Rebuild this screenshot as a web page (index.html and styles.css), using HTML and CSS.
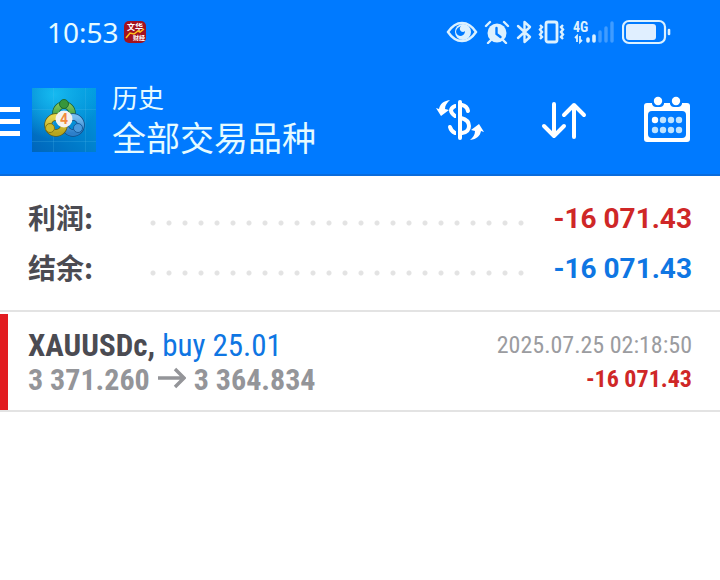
FILE: index.html
```html
<!DOCTYPE html>
<html lang="zh-CN">
<head>
  <meta charset="UTF-8" />
  <meta name="viewport" content="width=device-width, initial-scale=1.0"/>
  <title>历史</title>
  <link rel="stylesheet" href="styles.css">
</head>
<body>
  <header class="header">
    <div class="status-bar">
      <span class="clock">10:53</span>
      <svg class="app-badge" width="22" height="22" viewBox="0 0 22 22">
        <rect width="22" height="22" rx="5" fill="#a3121f"/>
        <text x="3" y="9" class="badge-text">文华</text>
        <text x="9" y="19" class="badge-text badge-small">财经</text>
        <path d="M2 17l4-5 4 1 4-3 2 1 4-3" fill="none" stroke="#ffc21c" stroke-width="1.5"/>
      </svg>
      <div class="status-icons">
        <svg width="32" height="24" viewBox="0 0 32 24">
          <path d="M2 12Q8 3 16 3T30 12Q24 21 16 21T2 12Z" fill="none" stroke="#dcf1ff" stroke-width="2.4"/>
          <circle cx="17" cy="12" r="8" fill="#dcf1ff"/>
          <path d="M15 6q-5 2-5 6 1 4 5 4 4-1 4-5-1 1-2 1-2 0-3-2-1-2 1-4z" fill="#007aff"/>
        </svg>
        <svg width="26" height="24" viewBox="0 0 26 24">
          <circle cx="13" cy="13" r="9.5" fill="#dcf1ff"/>
          <path d="M2 6l4-4M24 6l-4-4M7 20l-3 3M19 20l3 3" stroke="#dcf1ff" stroke-width="2.4" stroke-linecap="round"/>
          <path d="M12.5 8v6l4 3" fill="none" stroke="#007aff" stroke-width="2.4" stroke-linecap="round"/>
        </svg>
        <svg width="16" height="24" viewBox="0 0 16 24">
          <path d="M2 6l12 11-5.500 5V2L14 7 2 18" fill="none" stroke="#dcf1ff" stroke-width="2.4" stroke-linejoin="round" stroke-linecap="round"/>
        </svg>
        <svg width="28" height="24" viewBox="0 0 28 24">
          <rect x="8" y="2" width="11" height="20" rx="2" fill="none" stroke="#dcf1ff" stroke-width="2.8"/>
          <path d="M2 5l2 2-2 2.500 2 2.500-2 2.500 2 2.500-2 2M25 5l-2 2 2 2.500-2 2.500 2 2.500-2 2.500 2 2" fill="none" stroke="#dcf1ff" stroke-width="2.4"/>
        </svg>
        <svg width="44" height="28" viewBox="0 0 44 28">
          <text x="1" y="14" class="network-text">4G</text>
          <path d="M5 24v-6l-2 2M8 18v6l2-2" fill="none" stroke="#dcf1ff" stroke-width="1.8"/>
          <path d="M16 23v-2M22 23v-5" stroke="#dcf1ff" stroke-width="3.6" stroke-linecap="round"/>
          <path d="M28 23v-9M34 23v-13M40 23V5" stroke="#409cff" stroke-width="3.4" stroke-linecap="round"/>
        </svg>
        <svg width="50" height="26" viewBox="0 0 50 26">
          <rect x="1" y="2" width="42" height="22" rx="6" fill="none" stroke="#dcf1ff" stroke-width="2.2"/>
          <rect x="4" y="5" width="30" height="16" rx="3" fill="#e0efff"/>
          <path d="M47 11v4" stroke="#dcf1ff" stroke-width="2.6" stroke-linecap="round"/>
        </svg>
      </div>
    </div>

    <div class="app-bar">
      <button class="menu-button" aria-label="菜单">
        <svg width="20" height="32" viewBox="0 0 20 32"><path d="M0 5.500h20M0 17.500h20M0 29.500h20" stroke="#fff" stroke-width="5"/></svg>
      </button>
      <svg class="logo" width="64" height="64" viewBox="0 0 64 64">
        <defs>
          <linearGradient id="sky" x1="1" y1="0" x2="0" y2="1">
            <stop offset="0" stop-color="#009ce0"/><stop offset="1" stop-color="#0065bb"/>
          </linearGradient>
          <radialGradient id="glow" cx="0.35" cy="0.1" r="0.7">
            <stop offset="0" stop-color="#16baf0"/><stop offset="1" stop-color="#16baf0" stop-opacity="0"/>
          </radialGradient>
          <linearGradient id="green" x2="0" y2="1"><stop offset="0" stop-color="#80c35b"/><stop offset="1" stop-color="#238c35"/></linearGradient>
          <linearGradient id="yellow" x2="0" y2="1"><stop offset="0" stop-color="#e7d64c"/><stop offset="1" stop-color="#b8a51e"/></linearGradient>
          <linearGradient id="blue" x2="0" y2="1"><stop offset="0" stop-color="#77bdf0"/><stop offset="1" stop-color="#2c7fca"/></linearGradient>
        </defs>
        <rect width="64" height="64" fill="url(#sky)"/>
        <rect width="64" height="64" fill="url(#glow)"/>
        <path d="M0 21.500h64M0 53.500h64M21.500 0v64M53.500 0v64" stroke="#5bc4ee" stroke-opacity="0.2"/>
        <circle cx="32" cy="25" r="8" fill="none" stroke="#175e35" stroke-width="7.5"/>
        <circle cx="32" cy="25" r="8" fill="none" stroke="url(#green)" stroke-width="6"/>
        <circle cx="41" cy="37" r="8" fill="none" stroke="#164a82" stroke-width="7.5"/>
        <circle cx="41" cy="37" r="8" fill="none" stroke="url(#blue)" stroke-width="6"/>
        <circle cx="24" cy="37" r="8" fill="none" stroke="#615b17" stroke-width="7.5"/>
        <circle cx="24" cy="37" r="8" fill="none" stroke="url(#yellow)" stroke-width="6"/>
        <circle cx="32" cy="16" r="4.5" fill="#37963b" stroke="#1d6c34"/>
        <circle cx="18" cy="40" r="4.5" fill="#cdbb2d" stroke="#827616"/>
        <circle cx="46" cy="40" r="4.5" fill="#4b9add" stroke="#155d9f"/>
        <circle cx="32" cy="31" r="8.5" fill="#f4f2ef"/>
        <text x="32" y="36" class="logo-text">4</text>
      </svg>
      <div class="titles">
        <h1 class="title">历史</h1>
        <div class="subtitle">全部交易品种</div>
      </div>
      <div class="actions">
        <button class="action" aria-label="货币">
          <svg width="48" height="44" viewBox="0 0 48 44">
            <path d="M19 8q-8 4 0 10M26 7q5 1 6 6M25 20q8 2 8 8t-7 7M14 29q1 4 5 6" fill="none" stroke="#fff" stroke-width="4" stroke-linecap="round"/>
            <path d="M21 4v37" stroke="#007aff" stroke-width="2"/>
            <path d="M24 4v36" stroke="#fff" stroke-width="4" stroke-linecap="round"/>
            <path d="M14 2C7 3 4 6 3 11L0 10l5 8 8-6-4-1c0-4 2-6 5-9zM34 42c7-1 10-4 11-9l3 1-5-8-8 6 4 1c0 4-2 6-5 9z" fill="#fff"/>
          </svg>
        </button>
        <button class="action" aria-label="排序">
          <svg width="46" height="44" viewBox="0 0 46 44">
            <path d="M13 6v32M3 28l10 10 10-10M33 39V7M23 17L33 7l10 10" fill="none" stroke="#fff" stroke-width="4" stroke-linecap="round" stroke-linejoin="round"/>
          </svg>
        </button>
        <button class="action" aria-label="日历">
          <svg width="46" height="48" viewBox="0 0 46 48">
            <path d="M3 7H43q3 0 3 3V43q0 3-3 3H3q-3 0-3-3V10q0-3 3-3z" fill="#fff"/>
            <path d="M8 7h12v1q-1 3-4 3h-4q-3 0-4-3zM26 7h12v1q-1 3-4 3h-4q-3 0-4-3z" fill="#007aff"/>
            <rect x="4" y="15" width="38" height="27" rx="4" fill="#007aff"/>
            <circle cx="14" cy="5" r="4.2" fill="#fff"/>
            <circle cx="32" cy="5" r="4.2" fill="#fff"/>
            <g fill="#bfe3ff">
              <circle cx="11" cy="24" r="3.2" fill="#fff"/><circle cx="19" cy="24" r="3.2"/><circle cx="27" cy="24" r="3.2"/><circle cx="35" cy="24" r="3.2"/>
              <circle cx="11" cy="34" r="3.2"/><circle cx="19" cy="34" r="3.2"/><circle cx="27" cy="34" r="3.2"/><circle cx="35" cy="34" r="3.2"/>
            </g>
          </svg>
        </button>
      </div>
    </div>
  </header>

  <main>
    <section class="summary">
      <div class="summary-row">
        <span class="summary-label">利润:</span>
        <span class="dots"></span>
        <span class="summary-value loss">-16 071.43</span>
      </div>
      <div class="summary-row">
        <span class="summary-label">结余:</span>
        <span class="dots"></span>
        <span class="summary-value balance">-16 071.43</span>
      </div>
    </section>

    <section class="deals">
      <div class="deal">
        <div class="deal-row">
          <div class="deal-name"><strong>XAUUSDc,</strong> <span class="side">buy 25.01</span></div>
          <time class="deal-time">2025.07.25 02:18:50</time>
        </div>
        <div class="deal-row">
          <div class="deal-prices">
            <span>3 371.260</span>
            <svg width="28" height="24" viewBox="0 0 28 24"><path d="M0 11h26M17 2l9 9-9 9" fill="none" stroke="#949599" stroke-width="3.4"/></svg>
            <span>3 364.834</span>
          </div>
          <div class="deal-profit loss">-16 071.43</div>
        </div>
      </div>
    </section>
  </main>
</body>
</html>
```
FILE: styles.css
```css
* {
  box-sizing: border-box;
}

body {
  margin: 0;
  background: #fff;
  color: #4b4b52;
  font-family: Roboto, "Noto Sans CJK SC", sans-serif;
}

svg {
  display: block;
  flex: none;
}

button {
  padding: 0;
  border: none;
  background: none;
  cursor: pointer;
}

.header {
  background: #007aff;
  color: #e6fbff;
  box-shadow: inset 0 -2px #0a6cdc;
}

/* status bar */
.status-bar {
  display: flex;
  align-items: center;
  height: 64px;
  padding: 0 48px 0 47px;
}

.clock {
  font-family: "Noto Sans", sans-serif;
  font-size: 28px;
  line-height: 32px;
}

.app-badge {
  margin-left: 5px;
}

.badge-text {
  fill: #fff;
  font-size: 8px;
  font-weight: bold;
}

.badge-small {
  font-size: 6px;
}

.status-icons {
  display: flex;
  align-items: center;
  gap: 6px;
  margin-left: auto;
}

.network-text {
  fill: #dcf1ff;
  font-family: "Roboto Condensed", "Liberation Sans Narrow", sans-serif;
  font-size: 14px;
  font-weight: bold;
}

/* app bar */
.app-bar {
  display: flex;
  align-items: center;
  height: 112px;
  padding-right: 30px;
}

.menu-button {
  margin-right: 12px;
}

.logo-text {
  fill: #f18a3c;
  font-size: 14px;
  font-weight: bold;
  text-anchor: middle;
}

.titles {
  margin-left: 16px;
}

.title {
  margin: 0;
  font-size: 26px;
  font-weight: normal;
  line-height: 38px;
}

.subtitle {
  font-size: 34px;
  line-height: 42px;
}

.actions {
  display: flex;
  align-items: center;
  gap: 57px;
  margin-left: auto;
}

/* totals */
.summary {
  padding: 17px 28px;
  border-bottom: 2px solid #e3e3e3;
}

.summary-row {
  display: flex;
  align-items: center;
  height: 50px;
  font-weight: bold;
}

.summary-label {
  width: 117px;
  padding-bottom: 2px;
  font-family: "Noto Sans CJK SC", sans-serif;
  font-size: 28px;
  line-height: 40px;
}

.dots {
  flex: 1;
  height: 6px;
  margin: 10px 23px 0 0;
  background: radial-gradient(circle, #e3e3e3 2px, transparent 3px) 0 0 / 16px 6px;
}

.summary-value {
  font-size: 28px;
}

.loss {
  color: #cf2727;
}

.balance {
  color: #0f76e3;
}

/* closed positions */
.deals {
  padding-top: 2px;
  border-bottom: 2px solid #e3e3e3;
}

.deal {
  padding: 14px 28px 14px 20px;
  border-left: 8px solid #e21c20;
  font-family: "Roboto Condensed", "Liberation Sans Narrow", sans-serif;
}

.deal-row {
  display: flex;
  align-items: center;
  justify-content: space-between;
  height: 34px;
}

.deal-name {
  font-size: 31px;
}

.side {
  color: #0f76e3;
}

.deal-time {
  color: #9b9ca0;
  font-size: 24px;
}

.deal-prices {
  display: flex;
  align-items: center;
  gap: 8px;
  color: #949599;
  font-size: 30px;
  font-weight: bold;
}

.deal-profit {
  font-size: 24px;
  font-weight: bold;
}
```
